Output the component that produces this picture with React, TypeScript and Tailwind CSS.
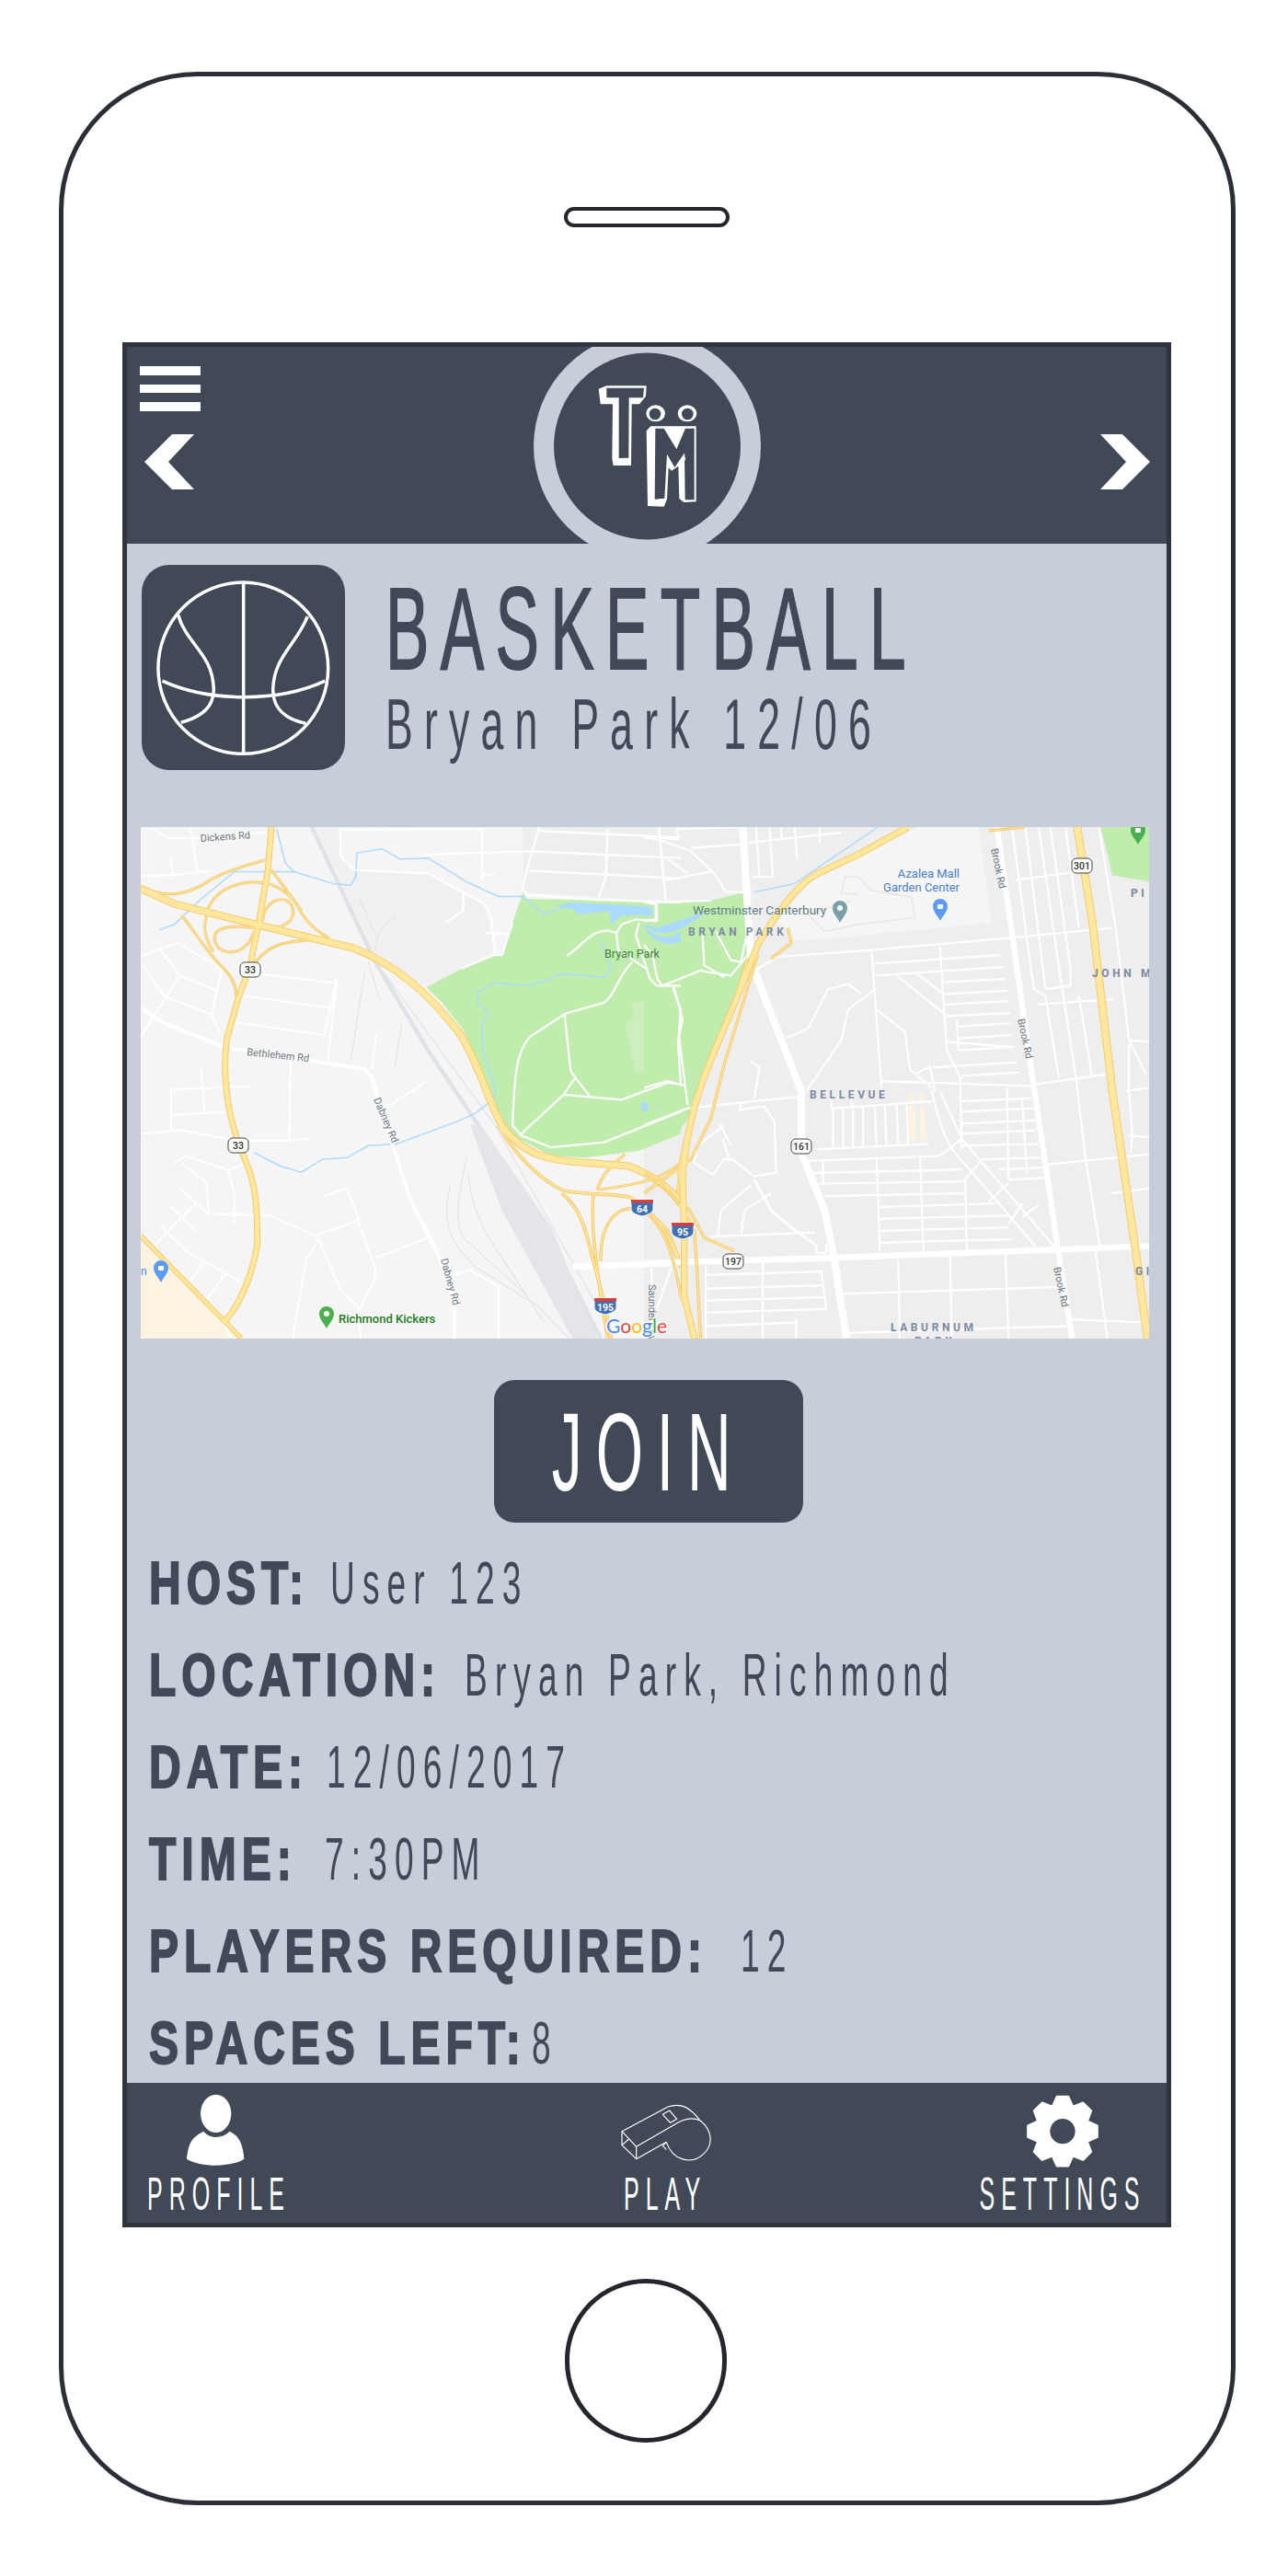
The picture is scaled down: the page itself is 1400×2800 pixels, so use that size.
const road3 = [
  "M60 24 L110 55 L190 58 L405 38", "M175 24 L195 155", "M34 168 L130 165 L230 152", "M118 112 L125 165",
  "M600 24 L602 110 L640 150 L850 160 L1010 250 L1030 290 L1040 400 L1060 400 L1090 305", "M605 32 L1000 30",
  "M835 105 L1140 95 L1568 115", "M1003 30 L1003 180 M1003 162 L1040 165", "M950 215 L950 270 L900 305",
  "M1012 335 L1080 338", "M945 440 L1040 397", "M1165 24 L1118 200 L1130 222 L1330 238 L1568 245",
  "M1165 35 L1568 55", "M1360 30 L1355 170 L1335 232", "M1505 24 L1525 240", "M1138 152 L1568 175",
  "M1245 402 C1290 370 1310 330 1360 328 L1385 335 L1400 310 L1440 295 L1500 300 L1500 250",
  "M1385 335 L1390 385 L1470 440 M1450 305 L1440 340 L1480 470 L1500 490 L1568 490",
  "M1430 420 C1390 460 1380 520 1350 540 L1240 572 L1140 640 C1100 680 1095 760 1090 900 L1115 930 L1200 965 L1350 950 L1568 860",
  "M1238 575 L1255 740 L1268 760 L1235 810 L1115 925 M1268 760 L1308 812 M1235 810 L1400 825 L1530 775 L1568 780",
  "M1545 495 L1568 560 L1560 660 L1568 780",
  "M34 420 L100 520 L235 575 L260 630", "M34 405 L90 380 L140 365 L265 440 L235 575", "M90 385 L145 460 L250 505",
  "M145 460 L70 580 L34 640", "M330 450 L585 482 M325 520 L570 555 M305 598 L555 635 L590 470", "M690 735 L703 630",
  "M565 710 L590 480", "M460 710 L455 945 L510 940 M330 945 L455 945", "M34 925 L150 915 L280 940",
  "M118 795 L345 785 M120 795 L120 915 M118 870 L275 860 M205 730 L215 860", "M730 850 L840 775",
  "M150 1010 L220 1070 L228 1160 L400 1165 L530 1225 L650 1180 L700 1320 L700 1350 L655 1440 L600 1380 L540 1235 L505 1290 L465 1526",
  "M125 1015 L160 990 L280 1030 L300 1100 L300 1190", "M285 1030 L325 1015",
  "M145 1085 L225 1160 M120 1140 L190 1210 M190 1130 L70 1255 M90 1195 L170 1275 L320 1360",
  "M550 1110 L620 1085 L655 1180 M700 1290 L850 1230", "M215 1300 L170 1365 M275 1335 L220 1415", "M650 1440 L660 1526",
  "M920 1340 L970 1325 L1050 1375 L1050 1526", "M1485 1320 L1485 1526", "M1540 1320 L1500 1440",
];

const road4 = [
  "M0 55 L40 60 L140 95 L210 160 L245 215 L300 215", "M45 24 L65 240", "M0 245 L200 240", "M60 110 L130 160",
  "M100 24 L100 60 L50 55", "M100 30 L295 24", "M140 85 L290 75", "M65 180 L200 155",
  "M310 70 L590 40", "M335 24 L345 170", "M375 24 L385 170 L325 170", "M410 24 L412 60", "M450 24 L458 120", "M525 24 L525 70",
  "M0 245 L35 250 L35 295 L0 300", "M0 370 L25 400 L40 470 L55 490 L170 445 L190 450 L260 460 L310 400",
  "M175 340 L180 430 L240 465", "M215 330 L260 415 L290 420 L305 350", "M90 495 L115 590 L105 640 L130 840",
  "M0 790 L70 770 L125 785", "M0 900 L130 850", "M130 850 L470 815",
  "M340 440 L400 405 L680 385 L1090 350 L1400 320", "M680 385 L710 790", "M885 375 L905 680 L945 760 L950 970",
  "M690 425 L1065 400", "M690 460 L1075 435", "M890 480 L1080 470", "M895 515 L1085 505", "M900 545 L1090 535",
  "M895 580 L1095 570", "M935 610 L1095 600", "M935 645 L1100 635", "M905 655 L1105 670 M940 680 L1105 670 M935 590 L940 680",
  "M865 730 L1115 715", "M950 755 L1120 745", "M710 770 L1160 785", "M950 830 L1160 820", "M950 860 L1165 850", "M950 895 L1170 885",
  "M950 925 L1170 915", "M945 960 L1180 955", "M1010 1000 L1185 995", "M1060 1030 L1190 1025", "M1090 1060 L1195 1055",
  "M565 850 L860 830", "M520 970 L850 955", "M565 850 L565 970 M595 850 L595 965 M625 850 L625 965 M655 845 L655 965 M690 845 L695 965 M720 845 L725 960 M755 840 L760 960 M785 840 L790 955 M560 800 L560 850 M620 800 L620 850",
  "M490 1005 L880 990", "M500 1040 L950 1030", "M500 1072 L960 1065", "M540 1108 L960 1100", "M700 1140 L1050 1130", "M700 1175 L1090 1165",
  "M705 1210 L1090 1200", "M705 1245 L1100 1235", "M535 1000 L535 1075 M695 990 L705 1270 M825 985 L835 1270 M960 1060 L965 1265 M1085 790 L1090 1060 M1130 820 L1145 1040",
  "M860 800 C880 880 900 950 930 980 L1170 1255", "M885 800 L950 940 L1225 1255", "M950 940 L885 990", "M1010 1000 L960 1060", "M1090 1070 L1030 1125", "M1130 1130 L1090 1190", "M1180 1135 L1130 1170",
  "M755 460 L895 570", "M815 455 L890 510", "M695 560 L780 625 L795 735 L860 790", "M685 505 L610 560 L590 650 L485 800",
  "M650 515 L610 485 L550 500 L490 615 L425 645", "M810 750 L855 728 L870 800",
  "M320 712 L345 730 L330 820", "M290 840 L285 855 L360 845 L390 890 L395 1040 L330 1050 L290 1020 L265 1000 L240 1000 L205 1045 L150 1010 L160 960 L240 900",
  "M225 895 L260 960 M235 940 L255 1000", "M320 1075 L230 1150 L220 1225", "M380 1100 L300 1150 L290 1225", "M195 1228 L510 1215", "M515 1250 L515 1275 L545 1275 M545 1250 L545 1275",
  "M185 1340 L530 1330 L545 1440", "M185 1380 L535 1370", "M185 1415 L540 1405", "M185 1450 L545 1440", "M185 1490 L455 1480", "M185 1315 L185 1526 M355 1305 L355 1526 M455 1470 L455 1526",
  "M590 1395 L1250 1375", "M610 1510 L1270 1490", "M760 1295 L765 1526", "M915 1285 L920 1526", "M1080 1280 L1090 1526", "M1350 1270 L1385 1526", "M1270 1470 L1510 1480",
  "M1100 24 L1165 500 L1200 520 L1240 760", "M1140 24 L1200 500", "M1180 24 L1250 500 L1290 750 L1320 1000 L1365 1270", "M1215 24 L1275 440 L1275 490 L1200 500", "M1260 24 L1300 320",
  "M1300 520 L1340 760", "M1360 24 L1410 320 L1450 650 L1500 750", "M1110 180 L1330 150", "M1175 545 L1405 530", "M1170 780 L1385 750", "M1210 1015 L1510 985",
  "M1400 1100 L1510 1085", "M1440 800 L1510 790", "M1450 930 L1510 935", "M1450 650 L1510 655", "M1450 660 L1450 800 L1460 930 L1455 980",
];

const highway3 = [
  { d: "M34 205 L130 250 L400 320 L640 380 C760 430 850 510 940 630 C1000 730 1020 830 1060 900 C1120 990 1200 1005 1300 1010 L1420 1020 C1500 1050 1550 1100 1568 1130", w: 22 },
  { d: "M405 24 L395 150 L370 300 L345 430 L310 530 L280 640 C270 700 272 780 285 850 C295 910 310 950 345 1040 C365 1110 365 1180 365 1250 C350 1340 320 1420 270 1480", w: 18 },
  { d: "M34 198 C100 235 170 225 230 180 C290 145 350 135 385 120", w: 8 },
  { d: "M225 265 C250 200 330 175 395 190 C440 205 470 235 490 270", w: 8 },
  { d: "M355 330 C340 400 260 410 245 360 C235 320 280 310 355 320", w: 8 },
  { d: "M380 300 C385 230 460 215 467 270 C470 300 440 315 420 320", w: 8 },
  { d: "M150 285 C190 330 210 380 270 440 C300 470 305 500 305 520 M230 265 C205 310 215 350 240 390", w: 8 },
  { d: "M405 150 L470 240 C500 300 530 330 570 350", w: 8 },
  { d: "M360 420 C400 370 440 360 520 355", w: 8 },
  { d: "M1050 900 C1090 980 1170 1060 1230 1090 C1290 1105 1360 1100 1420 1110 C1480 1140 1530 1200 1568 1320", w: 10 },
  { d: "M1230 1100 C1290 1150 1300 1220 1320 1300 L1350 1420 L1370 1526", w: 10 },
  { d: "M1320 1100 C1310 1200 1330 1300 1340 1400 L1360 1526 M1330 1090 C1345 1040 1380 1010 1410 985", w: 9 },
  { d: "M1340 1300 C1340 1220 1360 1170 1400 1150 C1450 1130 1500 1170 1530 1210 C1550 1250 1560 1280 1568 1320", w: 9 },
  { d: "M34 1225 L200 1400 L320 1526", w: 14 },
  { d: "M1330 1090 C1400 1080 1500 1070 1568 1010", w: 8 },
];

const highway4 = [
  { d: "M790 24 L650 100 L520 160 C460 190 400 270 340 370 L280 520 L190 730 C140 860 125 950 115 1050 L120 1200 L120 1400 L150 1526", w: 20 },
  { d: "M310 410 L250 600 L140 870 L110 1000 L100 1100", w: 9 },
  { d: "M340 400 L290 560 L240 720 L200 880 L140 1000 L0 1100", w: 9 },
  { d: "M0 1040 C60 1070 110 1120 150 1210 C160 1300 160 1400 170 1526", w: 9 },
  { d: "M130 1140 L180 1230 L270 1270", w: 9 },
  { d: "M0 1150 C50 1190 80 1240 110 1400 L160 1526", w: 9 },
  { d: "M380 410 L440 365 L430 320", w: 9 },
  { d: "M1030 35 L1140 24", w: 8 },
  { d: "M1295 24 L1340 300 L1400 800 L1470 1270 L1505 1526", w: 24 },
];

const rails3 = [
  "M655 235 L700 340", "M755 290 C710 320 700 350 700 390", "M670 450 L630 710", "M775 600 L755 735", "M680 420 L715 540",
  "M915 1070 C890 1170 900 1240 990 1320 L1160 1430 L1250 1526", "M960 990 C940 1100 920 1170 950 1230 L1130 1400",
  "M965 1040 C970 1130 1000 1200 1060 1290 L1180 1480", "M730 460 L1040 900 L1330 1430",
];

function Highways({ list }: { list: { d: string; w: number }[] }) {
  return (
    <>
      {list.map((h) => <path key={h.d + "o"} d={h.d} fill="none" stroke="#f8c768" strokeWidth={h.w} strokeLinejoin="round" />)}
      {list.map((h) => <path key={h.d + "i"} d={h.d} fill="none" stroke="#ffe79e" strokeWidth={h.w - 5} strokeLinejoin="round" />)}
    </>
  );
}

function Pin({ x, y, color, hole }: { x: number; y: number; color: string; hole?: boolean }) {
  return (
    <g transform={`translate(${x} ${y})`}>
      <path d="M0 14 C-3 8 -8 4 -8 -2 A8 8 0 1 1 8 -2 C8 4 3 8 0 14Z" fill={color} />
      {hole ? <circle cx="0" cy="-2" r="3" fill="#fff" /> : <rect x="-3" y="-4" width="6" height="5" rx="1" fill="#fff" />}
    </g>
  );
}

function Shield({ x, y, label, w = 22 }: { x: number; y: number; label: string; w?: number }) {
  return (
    <g>
      <rect x={x - w / 2} y={y - 8} width={w} height="16" rx="5" fill="#fff" stroke="#444" strokeWidth="1" />
      <text x={x} y={y + 4} textAnchor="middle" fontSize="10.5" fontWeight="500" fill="#333">{label}</text>
    </g>
  );
}

function Interstate({ x, y, label }: { x: number; y: number; label: string }) {
  return (
    <g>
      <path d={`M${x - 12} ${y - 8} L${x + 12} ${y - 8} L${x + 12} ${y + 2} C${x + 12} ${y + 7} ${x + 4} ${y + 9} ${x} ${y + 10} C${x - 4} ${y + 9} ${x - 12} ${y + 7} ${x - 12} ${y + 2}Z`} fill="#3f6fb5" stroke="#fff" strokeWidth="1" />
      <rect x={x - 12} y={y - 8} width="24" height="3.5" fill="#d9403a" />
      <text x={x} y={y + 6} textAnchor="middle" fontSize="10.5" fontWeight="700" fill="#fff">{label}</text>
    </g>
  );
}

function MapView() {
  return (
    <svg viewBox="0 0 1096 556" className="w-[1096px] h-[556px] ml-[15px] mt-[62px] shrink-0 font-['Roboto',sans-serif]">
      <rect width="1096" height="556" fill="#f5f5f5" />
      <rect x="547" width="549" height="556" fill="#eeeeee" />
      <g transform="scale(0.3827 0.37) translate(-34 -24)">
        <path d="M600 24 L600 110 L640 150 L850 160 L1010 250 L1040 400 L945 440 L845 495 L700 400 L690 380 L530 24Z" fill="#f0f0f0" />
        <path d="M1120 24 L1568 24 L1568 245 L1120 215Z" fill="#eeeeee" />
        <path d="M34 1240 L270 1480 L320 1526 L34 1526Z" fill="#fdf3e1" />
        <path d="M1120 215 L1130 235 L1568 245 L1568 925 L1450 975 L1300 995 L1200 990 L1090 930 L1040 850 L1000 730 L950 620 L890 540 L845 495 L945 440 L1060 395Z" fill="#c0ecae" />
        <path d="M1430 540 L1490 530 L1500 575 L1530 575 L1550 725 L1440 748 L1410 600 L1435 590Z" fill="#cdeebd" />
      </g>
      <g transform="translate(547 0) scale(0.3636 0.37) translate(0 -24)">
        <path d="M0 245 L200 240 L300 215 L320 420 L280 520 L190 730 L140 870 L110 910 L50 945 L0 960Z" fill="#c0ecae" />
        <path d="M1365 24 L1510 24 L1510 185 L1400 165 L1385 100Z" fill="#c0ecae" />
        <path d="M600 130 L650 100 L820 24 L1000 24 L1040 305 L460 360 L400 300 L520 160Z" fill="#f5f5f5" />
        <path d="M790 810 L805 810 L805 835 L790 835Z M820 810 L838 810 L838 835 L820 835Z M790 845 L810 845 L812 945 L795 945Z M825 845 L838 845 L848 945 L825 945Z" fill="#fdf3e1" />
      </g>
      <g transform="scale(0.3827 0.37) translate(-34 -24)" fill="none">
        <path d="M520 24 L600 200 L700 420 L850 680 L980 880 L1120 1100 L1250 1340 L1340 1526" stroke="#dfe2e7" strokeWidth="12" />
        <path d="M970 900 L1000 900 L1200 1200 L1330 1526 L1260 1526 L1060 1150Z" fill="#e3e5e9" />
        {rails3.map((d) => <path key={d} d={d} stroke="#dfe2e7" strokeWidth="3" />)}
        <path d="M88 325 L130 310 L200 240 L300 155 L470 155 L580 190 L630 195 L645 170 L648 100 L720 88 L770 118 L850 115 L960 185 L1050 228 L1120 228 L1180 280 L1260 250 M420 30 L445 130 L470 155 M990 510 L1040 482 L1140 490 L1230 455 L1350 465 L1370 440 L1340 360 M990 510 L990 540 L1020 570 L1005 600 L1005 680 L1040 790 L1040 820 L985 865 L930 890 L760 955 L680 960 L620 995 L550 1000 L490 1038 L430 1020 L355 980" stroke="#aadaff" strokeWidth="4" />
        <path d="M1215 255 L1260 245 L1480 258 L1490 280 L1400 285 L1370 310 L1365 270 L1280 280 L1260 265Z M1465 310 C1490 350 1530 360 1568 330 L1568 360 C1520 380 1470 350 1465 310Z" fill="#aadaff" />
        <ellipse cx="1465" cy="845" rx="10" ry="15" fill="#aadaff" />
        {road3.map((d) => <path key={d} d={d} stroke="#ffffff" strokeWidth="6" />)}
        <path d="M34 555 L100 600 L270 670 L670 735 L690 760 L750 960 L800 1120 L880 1280 L925 1420 L925 1526" stroke="#ffffff" strokeWidth="11" />
        <path d="M1262 1315 L1568 1305" stroke="#ffffff" strokeWidth="18" />
        <path d="M270 1480 L290 1526" stroke="#ffffff" strokeWidth="8" />
        <Highways list={highway3} />
      </g>
      <g transform="translate(547 0) scale(0.3636 0.37) translate(0 -24)" fill="none">
        <path d="M0 90 L0 0" stroke="none" />
        <path d="M540 330 L490 280 L620 240 M640 170 L600 170 L590 220 L640 220 M640 170 L680 210 L800 230 L810 290 L640 310 L540 330" stroke="#ece5dc" strokeWidth="4" />
        <path d="M330 215 L450 190 L700 24" stroke="#aadaff" strokeWidth="4" />
        <path d="M0 310 C40 350 90 350 190 270 L130 290 L40 320Z M0 255 L25 265 L20 285 L0 285Z" fill="#aadaff" />
        {road4.map((d) => <path key={d} d={d} stroke="#ffffff" strokeWidth="6" />)}
        <path d="M295 24 L320 420 L470 800 L470 980 L540 1150 L570 1300 L605 1526" stroke="#ffffff" strokeWidth="22" />
        <path d="M1055 24 L1160 750 L1240 1280 L1280 1526" stroke="#ffffff" strokeWidth="17" />
        <path d="M0 1305 L550 1290 L1510 1255" stroke="#ffffff" strokeWidth="18" />
        <path d="M330 1060 L380 1150 L440 1200 L510 1250" stroke="#ffffff" strokeWidth="8" />
        <Highways list={highway4} />
      </g>
      <g fontSize="11" fill="#6c7680">
        <text transform="translate(65 16) rotate(-4)">Dickens Rd</text>
        <text transform="translate(115 248) rotate(6)">Bethlehem Rd</text>
        <text transform="translate(253 296) rotate(67)">Dabney Rd</text>
        <text transform="translate(326 470) rotate(75)">Dabney Rd</text>
        <text transform="translate(552 497) rotate(90)">Saunders Ave</text>
        <text transform="translate(924 24) rotate(78)">Brook Rd</text>
        <text transform="translate(953 209) rotate(78)">Brook Rd</text>
        <text transform="translate(992 479) rotate(78)">Brook Rd</text>
      </g>
      <text x="504" y="142" fontSize="12.5" fill="#3f7f42">Bryan Park</text>
      <text x="215" y="539" fontSize="13" fontWeight="500" fill="#1e7e22">Richmond Kickers</text>
      <text x="600" y="95" fontSize="13.5" fill="#5f7a84">Westminster Canterbury</text>
      <text x="890" y="55" fontSize="13" textAnchor="end" fill="#4a7fd0">Azalea Mall</text>
      <text x="890" y="70" fontSize="13" textAnchor="end" fill="#4a7fd0">Garden Center</text>
      <text x="-9" y="487" fontSize="12" fill="#4285f4">wn</text>
      <g fontSize="12" fontWeight="700" fill="#7b8aa3" letterSpacing="3.6">
        <text x="595" y="118">BRYAN PARK</text>
        <text x="727" y="295">BELLEVUE</text>
        <text x="815" y="548">LABURNUM</text>
        <text x="841" y="563">PARK</text>
        <text x="1076" y="76">PI</text>
        <text x="1034" y="163">JOHN M</text>
        <text x="1081" y="487">GI</text>
      </g>
      <Pin x={202} y={531} color="#4caf50" hole />
      <Pin x={22} y={481} color="#5b9cf2" />
      <Pin x={869} y={88} color="#5b9cf2" />
      <Pin x={760} y={90} color="#78a0a8" hole />
      <Pin x={1084} y={5} color="#4caf50" />
      <Shield x={119} y={155} label="33" />
      <Shield x={106} y={346} label="33" />
      <Shield x={718} y={347} label="161" />
      <Shield x={644} y={472} label="197" />
      <Shield x={1023} y={42} label="301" />
      <Interstate x={545} y={413} label="64" />
      <Interstate x={589} y={438} label="95" />
      <Interstate x={505} y={520} label="195" />
      <text x="506" y="550" fontSize="21" fontFamily="Lato, sans-serif" stroke="#fff" strokeWidth="2" paintOrder="stroke">
        <tspan fill="#4285f4">G</tspan><tspan fill="#ea4335">o</tspan><tspan fill="#fbbc05">o</tspan><tspan fill="#4285f4">g</tspan><tspan fill="#34a853">l</tspan><tspan fill="#ea4335">e</tspan>
      </text>
    </svg>
  );
}

function Logo() {
  return (
    <svg viewBox="580 362 247 246" className="w-[247px] h-[246px] ml-[362px] mt-[-15px] shrink-0">
      <circle cx="703.5" cy="485" r="123.5" fill="#c7ced9" />
      <circle cx="703.5" cy="485" r="101.5" fill="#414956" />
      <g transform="translate(630 400) scale(0.3333)">
        <path d="M62 68 L88 58 L218 58 L216 92 L195 118 L170 118 L168 318 L110 318 L106 296 L108 118 L68 118Z" fill="#fff" />
        <path d="M88 65 L210 65 L207 97 L161 97 L160 293 L128 294 L128 97 L88 97Z" fill="#414956" />
        <ellipse cx="248" cy="148" rx="31" ry="27" fill="#fff" />
        <ellipse cx="246" cy="150" rx="19" ry="19" fill="#414956" />
        <ellipse cx="351" cy="148" rx="31" ry="27" fill="#fff" />
        <ellipse cx="352" cy="150" rx="19" ry="19" fill="#414956" />
        <path d="M218 205 L232 190 L380 190 L380 436 L340 438 L325 426 L322 320 L300 335 L290 325 L285 428 L275 452 L222 450Z" fill="#fff" />
        <path d="M247 197 L275 197 L316 265 L345 197 L374 197 L374 430 L344 430 L342 278 L310 325 L285 282 L277 425 L245 428Z" fill="#414956" />
        <path d="M285 282 L310 325 L342 278 L345 300 L318 322 L300 332 L287 320Z" fill="#fff" />
      </g>
    </svg>
  );
}

function Ball() {
  return (
    <svg viewBox="88 762 579 668" preserveAspectRatio="none" className="w-[221px] h-[223px]" fill="none" stroke="#ffffff">
      <g className="[&>*]:[vector-effect:non-scaling-stroke]" strokeWidth="3.5">
        <ellipse cx="377" cy="1098" rx="242" ry="279" />
        <path d="M378 820 L378 1378" />
        <path d="M147 1140 C280 1210 480 1210 610 1140" />
        <path d="M192 925 C215 1020 290 1050 293 1165 C295 1230 250 1260 200 1275" />
        <path d="M560 930 C530 1020 465 1060 462 1165 C460 1230 500 1265 555 1278" />
      </g>
    </svg>
  );
}

function Gear() {
  const pts: string[] = [];
  for (let i = 0; i < 8; i++) {
    const a = (i * Math.PI) / 4 - Math.PI / 2;
    [[-0.42, 84], [-0.16, 114], [0.16, 114], [0.42, 84]].forEach(([da, r]) => {
      pts.push(`${(150 + r * Math.cos(a + da)).toFixed(1)},${(140 + r * Math.sin(a + da)).toFixed(1)}`);
    });
  }
  return (
    <svg viewBox="0 0 300 285" className="w-[100px] h-[95px]">
      <polygon points={pts.join(" ")} fill="#fff" stroke="#fff" strokeWidth="8" strokeLinejoin="round" />
      <circle cx="150" cy="140" r="41" fill="#414956" />
    </svg>
  );
}

const details = [
  { label: "HOST:", value: "User 123", cls: "w-[197px]" },
  { label: "LOCATION:", value: "Bryan Park, Richmond", cls: "w-[343px]" },
  { label: "DATE:", value: "12/06/2017", cls: "w-[193px]" },
  { label: "TIME:", value: "7:30PM", cls: "w-[191px]" },
  { label: "PLAYERS REQUIRED:", value: "12", cls: "w-[643px]" },
  { label: "SPACES LEFT:", value: "8", cls: "w-[416px]" },
];

function NavItem({ label, icon, cls }: { label: string; icon: React.ReactNode; cls: string }) {
  return (
    <div className={`w-[150px] flex flex-col items-center shrink-0 ${cls}`}>
      <div className="h-[95px] flex items-center justify-center">{icon}</div>
      <div className="mt-[-5px] text-[50px] leading-none tracking-[14px] text-white whitespace-nowrap scale-x-[0.5] origin-center">{label}</div>
    </div>
  );
}

export default function App() {
  return (
    <div className="w-[1400px] h-[2800px] bg-white pt-[78px] pl-[64px] font-['Liberation_Sans',Arial,sans-serif] text-[#414956]">
      <div className="w-[1279px] h-[2645px] border-[5px] border-[#2a2e36] rounded-[150px] flex flex-col items-start">
        <div className="w-[180px] h-[22px] ml-[544px] mt-[142px] border-[4px] border-[#23262d] rounded-full shrink-0" />
        <div className="w-[1140px] h-[2049px] ml-[64px] mt-[125px] border-[5px] border-[#2f343d] bg-[#c7ced9] flex flex-col shrink-0 overflow-hidden">
          <header className="h-[214px] bg-[#414956] flex items-start overflow-hidden shrink-0">
            <div className="w-[66px] ml-[14px] mt-[21px] flex flex-col shrink-0">
              <div className="h-[10px] bg-white" />
              <div className="h-[9px] bg-white mt-[10px]" />
              <div className="h-[10px] bg-white mt-[10px]" />
              <svg viewBox="0 0 54 60" className="w-[54px] h-[60px] ml-[5px] mt-[25px]"><path d="M54 0 L30 0 L0 30 L30 60 L54 60 L26 30Z" fill="#fff" /></svg>
            </div>
            <Logo />
            <svg viewBox="0 0 54 60" className="w-[54px] h-[60px] ml-[369px] mt-[95px] shrink-0"><path d="M0 0 L24 0 L54 30 L24 60 L0 60 L28 30Z" fill="#fff" /></svg>
          </header>

          <div className="flex flex-col items-start flex-1 min-h-0">
            <div className="flex ml-[16px] mt-[23px] h-[223px] shrink-0">
              <div className="w-[221px] h-[223px] bg-[#414956] rounded-[30px] shrink-0"><Ball /></div>
              <div className="ml-[44px] flex flex-col w-[700px]">
                <h1 className="mt-[6px] text-[127px] leading-none tracking-[22px] whitespace-nowrap origin-left scale-x-[0.56] font-normal [-webkit-text-stroke:2px_#414956]">BASKETBALL</h1>
                <p className="mt-[2px] text-[77px] leading-none tracking-[21px] whitespace-nowrap origin-left scale-x-[0.58]">Bryan Park 12/06</p>
              </div>
            </div>

            <MapView />

            <button className="w-[336px] h-[155px] ml-[399px] mt-[45px] shrink-0 bg-[#414956] rounded-[22px] flex items-center justify-center text-white text-[120px] leading-none tracking-[27px] cursor-pointer">
              <span className="scale-x-[0.55] origin-center whitespace-nowrap">JOIN</span>
            </button>

            <div className="ml-[24px] mt-[34px] flex flex-col gap-[36px]">
              {details.map((d) => (
                <div key={d.label} className="flex h-[64px] text-[64px] leading-none whitespace-nowrap">
                  <div className={`shrink-0 ${d.cls}`}>
                    <span className="block origin-left scale-x-[0.75] font-bold tracking-[8px] [-webkit-text-stroke:2px_#414956]">{d.label}</span>
                  </div>
                  <span className="block origin-left scale-x-[0.58] tracking-[14px]">{d.value}</span>
                </div>
              ))}
            </div>
          </div>

          <nav className="h-[152px] bg-[#414956] flex pt-[6px] shrink-0">
            <NavItem cls="ml-[25px]" label="PROFILE" icon={
              <svg viewBox="0 0 300 285" className="w-[100px] h-[95px]">
                <ellipse cx="140" cy="82" rx="50" ry="62" fill="#fff" />
                <path d="M45 230 C50 180 60 160 100 140 C120 165 160 165 185 140 C215 155 228 180 232 230 C190 258 90 258 45 230Z" fill="#fff" />
              </svg>
            } />
            <NavItem cls="ml-[335px]" label="PLAY" icon={
              <svg viewBox="0 0 375 255" className="w-[125px] h-[85px]" fill="none" stroke="#fff" strokeWidth="3.5" strokeLinejoin="round">
                <path d="M45 125 L195 45 C240 30 270 50 300 90 C340 120 345 170 310 200 C270 235 210 220 190 160 L92 215 L45 170Z" />
                <path d="M45 125 L92 175 L92 215 M92 175 L230 95 C260 80 280 80 300 90 M45 170 L68 150" />
                <path d="M178 70 L200 57 L224 85 L203 97Z M190 160 L178 172 L190 185" />
              </svg>
            } />
            <NavItem cls="ml-[282px]" label="SETTINGS" icon={<Gear />} />
          </nav>
        </div>
        <div className="w-[176px] h-[178px] ml-[545px] mt-[56px] border-[5px] border-[#23262d] rounded-full shrink-0" />
      </div>
    </div>
  );
}
